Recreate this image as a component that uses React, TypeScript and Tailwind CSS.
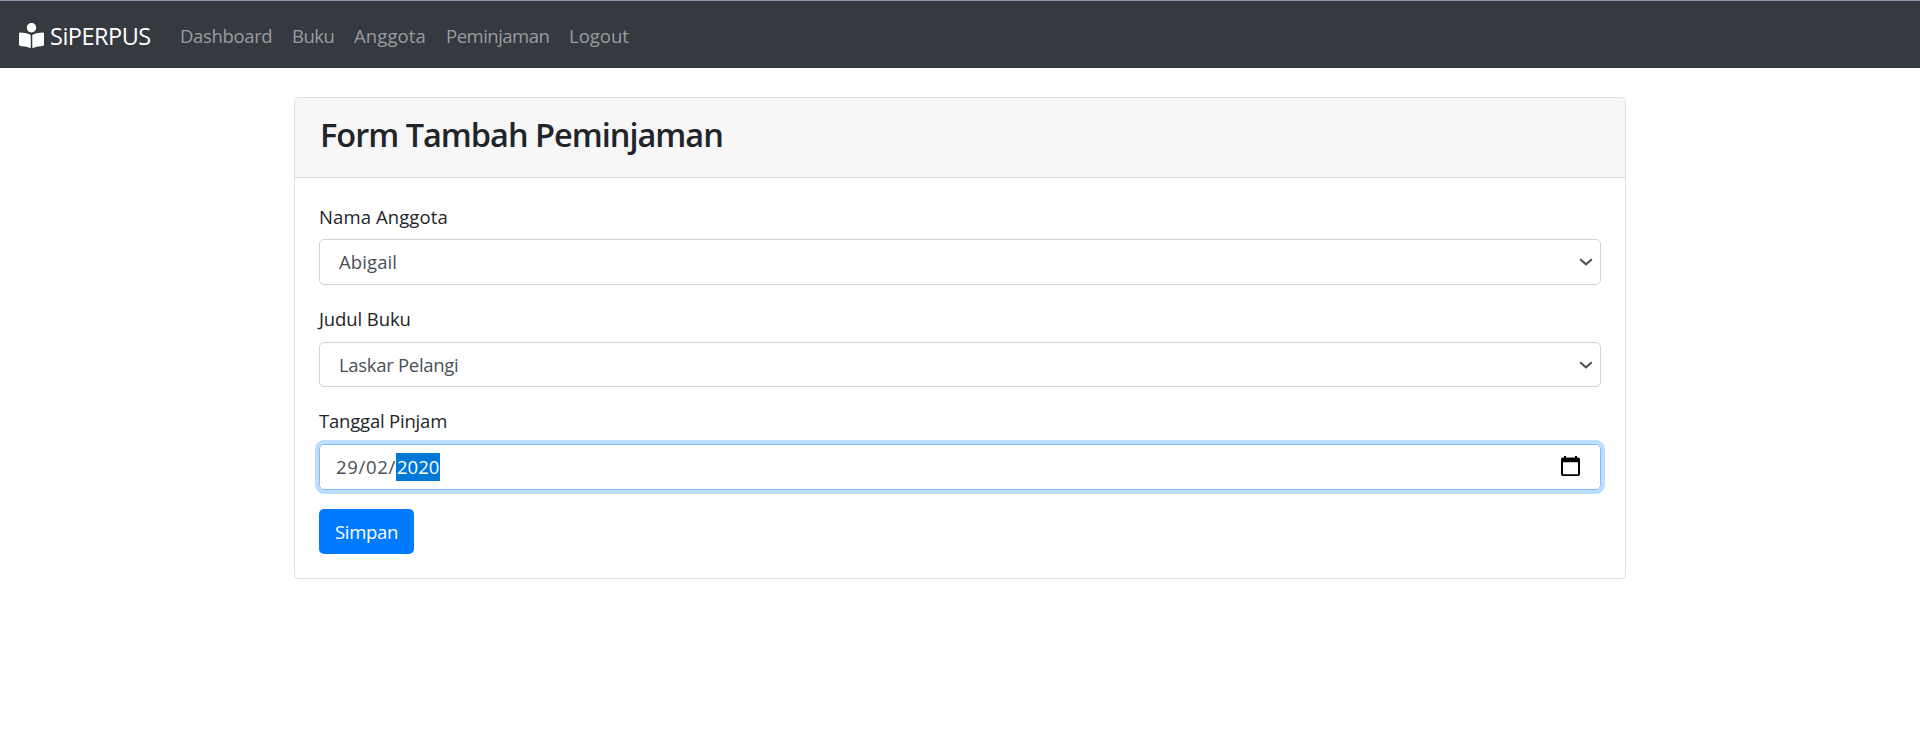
import { FaBookReader } from "react-icons/fa";

const links = [
  { label: "Dashboard", style: "w-[93px] tracking-[-0.35px]" },
  { label: "Buku", style: "w-[43px] tracking-[-0.5px]" },
  { label: "Anggota", style: "w-[73px] tracking-[0.1px]" },
  { label: "Peminjaman", style: "w-[104px] tracking-[-0.5px]" },
  { label: "Logout", style: "w-[62px] tracking-[0px]" },
];

function Navbar() {
  return (
    <nav className="flex h-[68px] items-center border-t border-[#9397ae] bg-[#343a40] pl-[19px] pt-[2px]">
      <a href="#" className="flex w-[161px] items-center whitespace-nowrap text-white">
        <FaBookReader className="mr-[6px] size-[25px] shrink-0" />
        <span className="text-[23.5px] leading-[36px] tracking-[-0.5px]">SiPERPUS</span>
      </a>
      <div className="flex gap-[19px] text-[18.5px] leading-[29px] text-[#999c9f]">
        {links.map((link) => (
          <a key={link.label} href="#" className={"whitespace-nowrap " + link.style}>
            {link.label}
          </a>
        ))}
      </div>
    </nav>
  );
}

type SelectFieldProps = {
  label: string;
  labelStyle: string;
  value: string;
  valueStyle: string;
  height: string;
};

function SelectField({ label, labelStyle, value, valueStyle, height }: SelectFieldProps) {
  return (
    <div>
      <label className={"block h-[29px] " + labelStyle}>{label}</label>
      <div className={"mt-[9px] flex items-center justify-between rounded-[5px] border border-[#ced4da] pl-[19px] pr-[7px] text-[#495057] " + height}>
        <span className={valueStyle}>{value}</span>
        <svg className="h-[8px] w-[14px]" viewBox="0 0 14 8" fill="none" stroke="#495057" strokeWidth="2">
          <path d="M1.2 1.2 7 6.3 12.8 1.2" />
        </svg>
      </div>
    </div>
  );
}

function DateField() {
  return (
    <div>
      <label className="block h-[29px] leading-[29px] tracking-[-0.2px]">Tanggal Pinjam</label>
      <div className="mt-[9px] flex h-[46px] items-center justify-between rounded-[5px] border border-[#80bdff] pl-[16px] pr-[20px] text-[#495057] shadow-[0_0_0_4px_#bfdeff]">
        <div className="flex items-center">
          <span className="w-[60px] leading-[28px] tracking-[0.7px]">29/02/</span>
          <span className="h-[28px] w-[44px] bg-[#0078d7] pl-px leading-[28px] text-white">2020</span>
        </div>
        <svg className="mb-[3px] h-[20px] w-[19px]" viewBox="0 0 19 20">
          <path fill="#000" fillRule="evenodd" d="M3 0h2v1.500h9V0h2v1.500h1.200A1.800 1.800 0 0 1 19 3.300v14.900a1.800 1.800 0 0 1-1.800 1.800H1.800A1.800 1.800 0 0 1 0 18.200V3.300A1.800 1.800 0 0 1 1.800 1.500H3ZM2 6.300V18.200H17V6.300Z" />
        </svg>
      </div>
    </div>
  );
}

export default function App() {
  return (
    <div className="h-[741px] bg-white font-['Open_Sans','Noto_Sans',sans-serif] text-[18.5px] text-[#212529]">
      <Navbar />
      <main className="mx-auto mt-[29px] h-[482px] w-[1332px] overflow-hidden rounded-[5px] border border-[#dfdfdf]">
        <header className="h-[80px] border-b border-[#d8d8d8] bg-[#f7f7f7] pl-[25px] pt-[17px]">
          <h3 className="text-[32.5px] font-semibold leading-[40px] tracking-[-1px]">Form Tambah Peminjaman</h3>
        </header>
        <form className="px-[24px] pt-[23px]">
          <SelectField
            label="Nama Anggota"
            labelStyle="leading-[31px] tracking-[0.1px]"
            value="Abigail"
            valueStyle="tracking-[0.1px]"
            height="h-[46px]"
          />
          <div className="mt-[19px]">
            <SelectField
              label="Judul Buku"
              labelStyle="leading-[29px] tracking-[-0.1px]"
              value="Laskar Pelangi"
              valueStyle="pt-px tracking-[-0.3px]"
              height="h-[45px]"
            />
          </div>
          <div className="mt-[19px]">
            <DateField />
          </div>
          <button type="button" className="mt-[19px] h-[45px] w-[95px] rounded-[5px] bg-[#007bff] tracking-[-0.3px] text-white">
            Simpan
          </button>
        </form>
      </main>
    </div>
  );
}
